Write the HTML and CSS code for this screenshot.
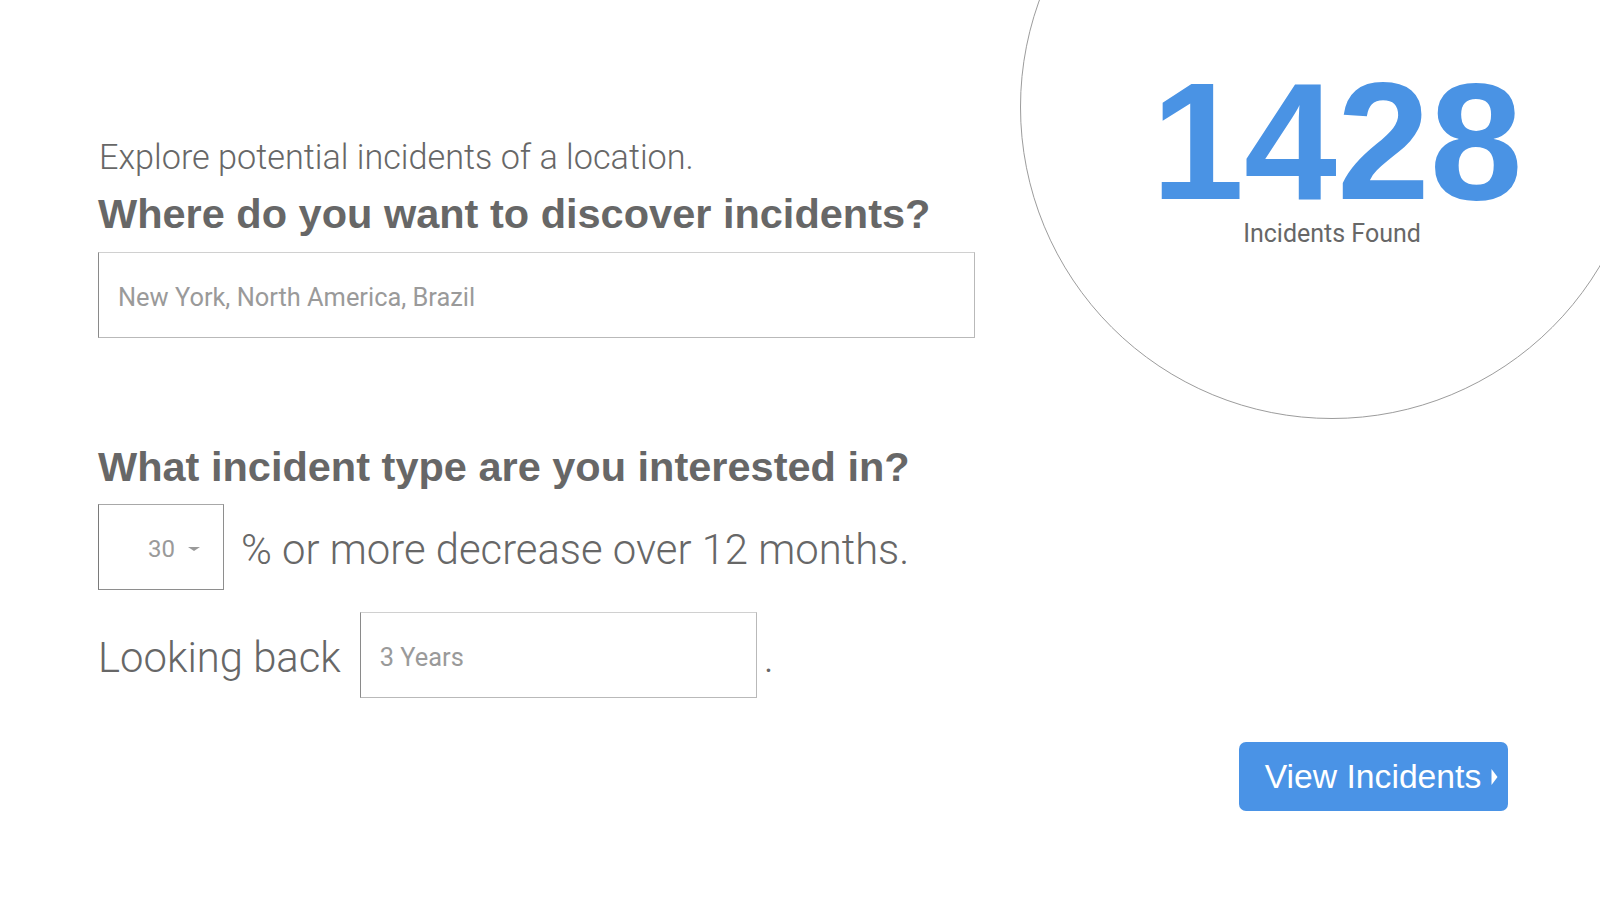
FILE: index.html
```html
<!DOCTYPE html>
<html lang="en">
<head>
<meta charset="utf-8">
<title>Explore incidents</title>
<link rel="stylesheet" href="styles.css">
</head>
<body>
<div class="page">
  <main class="form">
    <p class="intro">Explore potential incidents of a location.</p>
    <h2 class="question">Where do you want to discover incidents?</h2>
    <div class="field field-location"><span class="placeholder">New York, North America, Brazil</span></div>

    <h2 class="question question-type">What incident type are you interested in?</h2>
    <div class="row row-percent">
      <div class="select"><span class="select-value">30</span><span class="caret"></span></div>
      <span class="sentence">% or more decrease over 12 months.</span>
    </div>
    <div class="row row-back">
      <span class="sentence">Looking back</span>
      <div class="field field-years"><span class="placeholder">3 Years</span></div>
      <span class="sentence dot">.</span>
    </div>
  </main>
  <aside class="side">
    <div class="circle">
      <div class="count">1428</div>
      <div class="count-label">Incidents Found</div>
    </div>
    <button class="view-btn" type="button">View Incidents <svg class="arrow" width="7" height="18" viewBox="0 0 7 18"><path d="M0.5 1 L6.5 9 L0.5 17 Z" fill="#fff"/></svg></button>
  </aside>
</div>
</body>
</html>
```

FILE: styles.css
```css
html, body {
  margin: 0;
  padding: 0;
  background: #fff;
}

.page {
  width: 1600px;
  height: 900px;
  overflow: hidden;
  display: flex;
  color: #676767;
  font-family: "Liberation Sans", Arial, sans-serif;
}

.form {
  padding-left: 98px;
  padding-top: 137px;
  width: 877px;
  flex: none;
}

.intro {
  margin: 0;
  font-family: Roboto, "Liberation Sans", sans-serif;
  font-weight: 300;
  font-size: 34.2px;
  line-height: 40px;
  padding-left: 1px;
}

.question {
  margin: 13px 0 0;
  font-weight: 700;
  font-size: 41.5px;
  line-height: 48px;
  color: #676767;
}

.field {
  box-sizing: border-box;
  height: 86px;
  border: 1px solid #b9b9b9;
  border-top-color: #d0d0d0;
  border-left-color: #8a8a8a;
  display: flex;
  align-items: center;
  padding-left: 19px;
}

.field-location {
  margin-top: 14px;
  width: 877px;
}

.placeholder {
  font-family: Roboto, "Liberation Sans", sans-serif;
  font-weight: 400;
  font-size: 25.4px;
  color: #9a9a9a;
  padding-top: 3px;
}

.question-type {
  margin-top: 105px;
}

.row {
  display: flex;
  align-items: center;
}

.row-percent {
  margin-top: 13px;
  gap: 17px;
}

.row-back {
  margin-top: 22px;
  gap: 19px;
}

.select {
  box-sizing: border-box;
  width: 126px;
  height: 86px;
  border: 1px solid #8e8e8e;
  border-top-color: #a8a8a8;
  border-left-color: #7a7a7a;
  display: flex;
  align-items: center;
  padding-left: 49px;
  gap: 13px;
}

.select-value {
  font-family: Roboto, "Liberation Sans", sans-serif;
  font-size: 24px;
  color: #9a9a9a;
  padding-top: 3px;
}

.caret {
  width: 0;
  height: 0;
  border-left: 6px solid transparent;
  border-right: 6px solid transparent;
  border-top: 4px solid #9a9a9a;
  margin-top: 4px;
}

.sentence {
  font-family: Roboto, "Liberation Sans", sans-serif;
  font-weight: 300;
  font-size: 41.8px;
  line-height: 48px;
  padding-top: 6px;
  color: #676767;
}

.field-years {
  width: 397px;
}

.dot {
  margin-left: -12px;
}

.side {
  margin-left: 45px;
  display: flex;
  flex-direction: column;
  flex: none;
}

.circle {
  box-sizing: border-box;
  width: 624px;
  height: 624px;
  margin-top: -205px;
  border: 1px solid #9c9c9c;
  border-radius: 50%;
  display: flex;
  flex-direction: column;
  align-items: center;
  padding-top: 280px;
}

.count {
  font-weight: 700;
  font-size: 167px;
  line-height: 130px;
  letter-spacing: 0;
  color: #4a93e4;
  margin-left: 10px;
}

.count-label {
  font-family: Roboto, "Liberation Sans", sans-serif;
  font-weight: 400;
  font-size: 25px;
  line-height: 30px;
  margin-top: 13px;
  color: #676767;
}

.view-btn {
  align-self: flex-start;
  margin-left: 219px;
  margin-top: 323px;
  width: 269px;
  height: 69px;
  border: none;
  border-radius: 7px;
  background: #4a93e6;
  color: #fff;
  font-family: "Liberation Sans", Arial, sans-serif;
  font-size: 33.7px;
  padding: 0 0 0 16px;
  display: flex;
  align-items: center;
  justify-content: center;
  gap: 10px;
}

.arrow {
  display: block;
}
```
